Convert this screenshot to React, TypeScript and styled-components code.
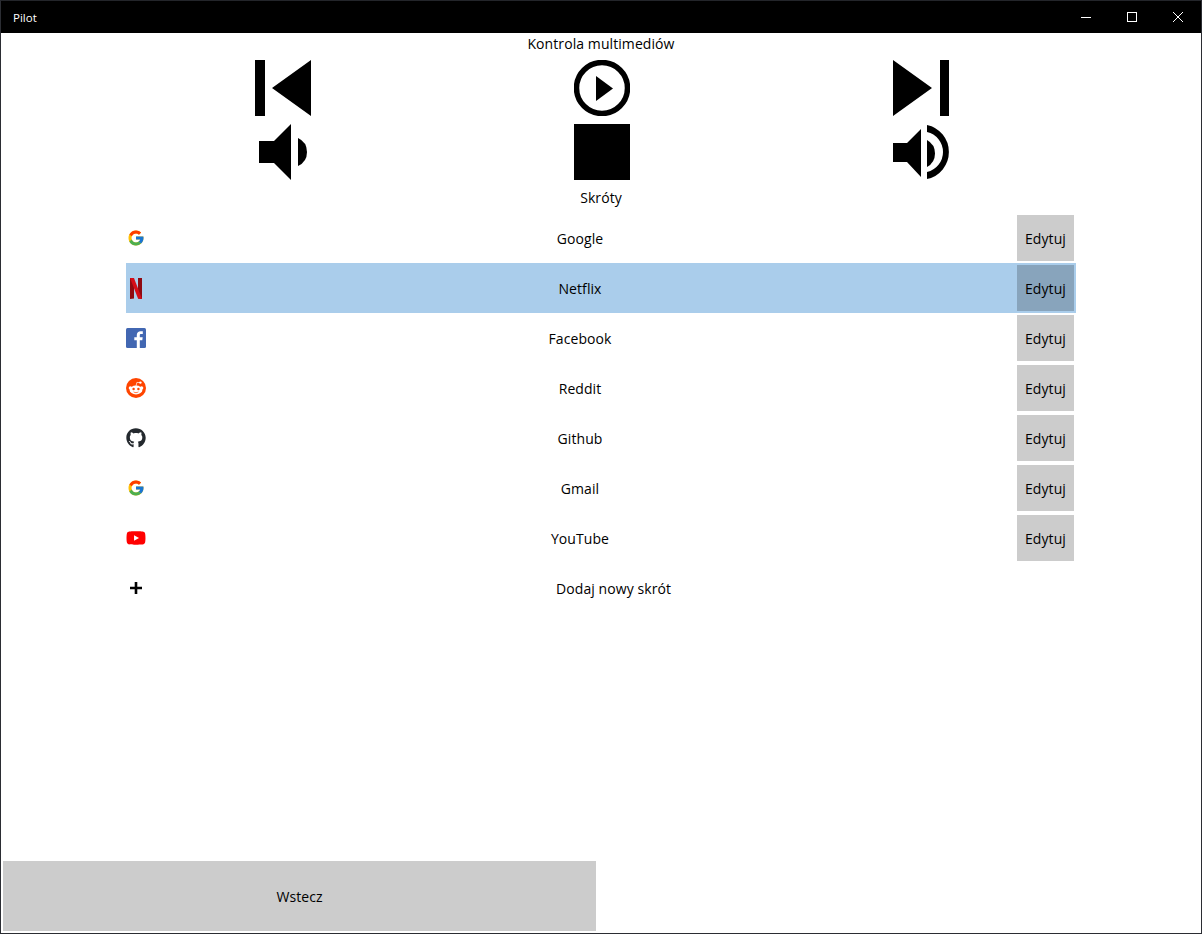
import React from 'react';
import styled, { createGlobalStyle } from 'styled-components';
import { FcGoogle } from 'react-icons/fc';
import { FaGithub, FaYoutube } from 'react-icons/fa';

const GlobalStyle = createGlobalStyle`
  html, body {
    margin: 0;
    padding: 0;
    background: #fff;
  }
  * {
    box-sizing: border-box;
  }
`;

const Window = styled.div`
  display: flex;
  flex-direction: column;
  width: 1202px;
  height: 934px;
  border: 1px solid #2b2d33;
  border-top-color: #23252a;
  background: #fff;
  color: #000;
  font-family: 'Open Sans', 'Noto Sans', sans-serif;
  font-size: 14px;
  letter-spacing: 0.08px;
  overflow: hidden;
`;

const TitleBar = styled.header`
  display: flex;
  align-items: center;
  justify-content: space-between;
  flex: none;
  height: 32px;
  padding-left: 12px;
  background: #000;
  color: #fff;
  font-size: 11.5px;
  letter-spacing: 0;
`;

const WindowControls = styled.div`
  display: flex;
`;

const WindowControl = styled.div`
  display: flex;
  align-items: center;
  justify-content: center;
  width: 46px;
  height: 32px;
`;

const Main = styled.main`
  display: flex;
  flex: 1;
  flex-direction: column;
  align-items: flex-start;
  padding: 0 0 2px 2px;
`;

const Heading = styled.div<{ $top: number }>`
  align-self: center;
  margin-top: ${p => p.$top}px;
  margin-right: 2px;
  height: 20px;
  line-height: 20px;
`;

const MediaGrid = styled.section`
  display: grid;
  grid-template-columns: repeat(3, 318px);
  grid-auto-rows: 56px;
  column-gap: 1px;
  row-gap: 8px;
  justify-items: center;
  margin: 6px 0 8px 121px;
`;

const MediaButton = styled.svg`
  display: block;
  width: 56px;
  height: 56px;
  fill: #000;
`;

const ShortcutList = styled.section`
  display: flex;
  flex-direction: column;
  width: 950px;
  margin: 5px 0 0 123px;
`;

const Row = styled.div<{ $active?: boolean }>`
  display: grid;
  grid-template-columns: 20px 1fr 57px;
  align-items: center;
  column-gap: 3px;
  height: 50px;
  padding-right: 2px;
  background: ${p => (p.$active ? '#aacdeb' : 'transparent')};
`;

const IconSlot = styled.div`
  display: flex;
  align-items: center;
  justify-content: center;
  width: 20px;
  height: 20px;
`;

const Label = styled.div<{ $offset?: number }>`
  margin-left: -3px;
  text-align: ${p => (p.$offset ? 'left' : 'center')};
  padding-left: ${p => p.$offset ?? 0}px;
`;

const EditButton = styled.div<{ $active?: boolean }>`
  display: flex;
  align-items: center;
  justify-content: center;
  height: 46px;
  background: ${p => (p.$active ? '#88a4bc' : '#cccccc')};
`;

const BackButton = styled.div`
  display: flex;
  align-items: center;
  justify-content: center;
  width: 593px;
  height: 70px;
  margin-top: auto;
  background: #cccccc;
`;

const BlurredLogo = styled.svg`
  filter: blur(0.4px);
`;

const Netflix = () => (
  <BlurredLogo width="14" height="21" viewBox="0 0 14 21">
    <path fill="#8f0a12" d="M1 0h4v20.5L1 21z" />
    <path fill="#8f0a12" d="M9 0h4v21l-4-.5z" />
    <path fill="#d50c18" d="M1 0h4l8 21-4-.5z" />
  </BlurredLogo>
);

const Facebook = () => (
  <svg width="20" height="20" viewBox="0 0 20 20">
    <rect width="20" height="20" rx="1.5" fill="#4267b2" />
    <path fill="#fff" d="M13.8 20v-7.7h2.5l.4-3h-2.9V7.4c0-.9.3-1.4 1.5-1.4h1.5V3.3c-.3 0-1.2-.1-2.2-.1-2.2 0-3.8 1.4-3.8 3.8v2.3H8.3v3h2.5V20z" />
  </svg>
);

const Reddit = () => (
  <svg width="20" height="20" viewBox="0 0 20 20">
    <circle cx="10" cy="10" r="10" fill="#ff4500" />
    <circle cx="4.4" cy="10" r="1.7" fill="#fff" />
    <circle cx="15.6" cy="10" r="1.7" fill="#fff" />
    <ellipse cx="10" cy="12" rx="6.4" ry="4.4" fill="#fff" />
    <circle cx="14.4" cy="4.6" r="1.2" fill="#fff" />
    <path d="M10 8l.9-3.6 3.4.3" fill="none" stroke="#fff" strokeWidth=".7" />
    <circle cx="7.6" cy="11" r="1.2" fill="#ff4500" />
    <circle cx="12.4" cy="11" r="1.2" fill="#ff4500" />
    <path d="M7.6 13.9c1.4 1 3.4 1 4.8 0" fill="none" stroke="#ff4500" strokeWidth=".7" />
  </svg>
);

const Plus = () => (
  <svg width="12" height="12" viewBox="0 0 12 12">
    <path fill="#000" d="M4.7 0h2.6v4.7H12v2.6H7.3V12H4.7V7.3H0V4.7h4.7z" />
  </svg>
);

const shortcuts = [
  { name: 'Google', icon: <FcGoogle size={18} /> },
  { name: 'Netflix', icon: <Netflix />, active: true },
  { name: 'Facebook', icon: <Facebook /> },
  { name: 'Reddit', icon: <Reddit /> },
  { name: 'Github', icon: <FaGithub size={20} color="#24292e" /> },
  { name: 'Gmail', icon: <FcGoogle size={18} /> },
  { name: 'YouTube', icon: <FaYoutube size={20} color="#ff0000" /> },
];

export default function App() {
  return (
    <Window>
      <GlobalStyle />
      <TitleBar>
        <span>Pilot</span>
        <WindowControls>
          <WindowControl>
            <svg width="10" height="10" viewBox="0 0 10 10">
              <path d="M0 5.5h10" stroke="#fff" />
            </svg>
          </WindowControl>
          <WindowControl>
            <svg width="10" height="10" viewBox="0 0 10 10">
              <rect x=".5" y=".5" width="9" height="9" fill="none" stroke="#fff" />
            </svg>
          </WindowControl>
          <WindowControl>
            <svg width="10" height="10" viewBox="0 0 10 10">
              <path d="M0 0l10 10M10 0L0 10" stroke="#fff" />
            </svg>
          </WindowControl>
        </WindowControls>
      </TitleBar>
      <Main>
        <Heading $top={1}>Kontrola multimediów</Heading>
        <MediaGrid>
          <MediaButton viewBox="0 0 56 56">
            <path d="M0 0h10v56H0zM17 28 56 0v56z" />
          </MediaButton>
          <MediaButton viewBox="0 0 56 56">
            <circle cx="28" cy="28" r="25.5" fill="none" stroke="#000" strokeWidth="5.5" />
            <path d="M22 16l17 12.5L22 41z" />
          </MediaButton>
          <MediaButton viewBox="0 0 56 56">
            <path d="M0 0l39 28L0 56zM47 0h9v56h-9z" />
          </MediaButton>
          <MediaButton viewBox="0 0 56 56">
            <path d="M4 17h15L36 0v56L19 39H4z" />
            <path d="M43 14a15.4 15.4 0 0 1 0 28z" />
          </MediaButton>
          <MediaButton viewBox="0 0 56 56">
            <path d="M0 0h56v56H0z" />
          </MediaButton>
          <MediaButton viewBox="0 0 56 56">
            <path d="M0 19h14L28 5v48L14 38H0z" />
            <path d="M34 16a15.4 15.4 0 0 1 0 27z" />
            <path d="M34 1a27.6 27.6 0 0 1 0 54v-7a20.5 20.5 0 0 0 0-40z" />
          </MediaButton>
        </MediaGrid>
        <Heading $top={0}>Skróty</Heading>
        <ShortcutList>
          {shortcuts.map(s => (
            <Row key={s.name} $active={s.active}>
              <IconSlot>{s.icon}</IconSlot>
              <Label>{s.name}</Label>
              <EditButton $active={s.active}>Edytuj</EditButton>
            </Row>
          ))}
          <Row>
            <IconSlot>
              <Plus />
            </IconSlot>
            <Label $offset={410}>Dodaj nowy skrót</Label>
          </Row>
        </ShortcutList>
        <BackButton>Wstecz</BackButton>
      </Main>
    </Window>
  );
}
